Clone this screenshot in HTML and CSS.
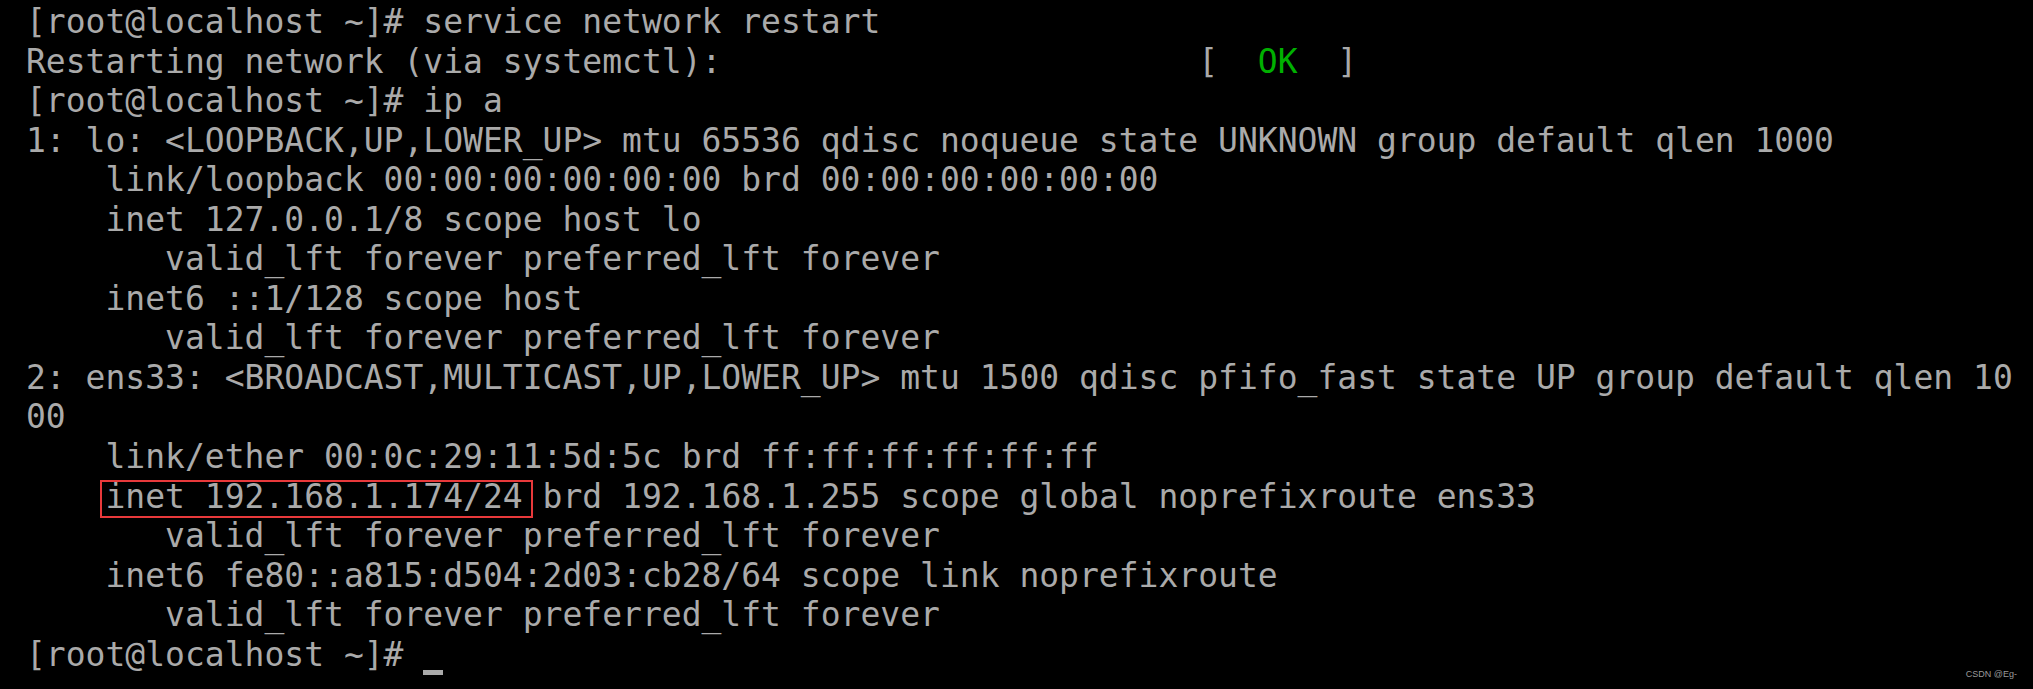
FILE: index.html
```html
<!DOCTYPE html>
<html lang="en">
<head>
<meta charset="utf-8">
<title>Terminal</title>
<link rel="stylesheet" href="styles.css">
</head>
<body>
<main class="screen">
<div class="console">
<div class="line">[root@localhost ~]# service network restart</div>
<div class="line"><span>Restarting network (via systemctl):                        [  </span><span class="ok">OK</span><span>  ]</span></div>
<div class="line">[root@localhost ~]# ip a</div>
<div class="line">1: lo: &lt;LOOPBACK,UP,LOWER_UP&gt; mtu 65536 qdisc noqueue state UNKNOWN group default qlen 1000</div>
<div class="line">    link/loopback 00:00:00:00:00:00 brd 00:00:00:00:00:00</div>
<div class="line">    inet 127.0.0.1/8 scope host lo</div>
<div class="line">       valid_lft forever preferred_lft forever</div>
<div class="line">    inet6 ::1/128 scope host</div>
<div class="line">       valid_lft forever preferred_lft forever</div>
<div class="line">2: ens33: &lt;BROADCAST,MULTICAST,UP,LOWER_UP&gt; mtu 1500 qdisc pfifo_fast state UP group default qlen 10</div>
<div class="line">00</div>
<div class="line">    link/ether 00:0c:29:11:5d:5c brd ff:ff:ff:ff:ff:ff</div>
<div class="line"><span>    </span><span class="mark">inet 192.168.1.174/24</span><span> brd 192.168.1.255 scope global noprefixroute ens33</span></div>
<div class="line">       valid_lft forever preferred_lft forever</div>
<div class="line">    inet6 fe80::a815:d504:2d03:cb28/64 scope link noprefixroute</div>
<div class="line">       valid_lft forever preferred_lft forever</div>
<div class="line"><span>[root@localhost ~]# </span><span class="cursor"></span></div>
</div>
<span class="watermark">CSDN @Eg-</span>
</main>
</body>
</html>
```

FILE: styles.css
```css
html, body {
  margin: 0;
  padding: 0;
  background: #000;
}

.screen {
  position: relative;
  width: 2033px;
  height: 689px;
  overflow: hidden;
  background: #000;
}

.console {
  display: flex;
  flex-direction: column;
  padding: 2px 0 0 26px;
  font-family: "DejaVu Sans Mono", "Liberation Mono", monospace;
  font-size: 33px;
  line-height: 39.56px;
  color: #aaaaaa;
}

.line {
  height: 39.56px;
  white-space: pre;
}

.ok {
  color: #00b000;
}

.mark {
  position: relative;
}

.mark::after {
  content: "";
  position: absolute;
  left: -5px;
  right: -10px;
  top: 3px;
  bottom: -2px;
  border: 2px solid #e8393b;
}

.cursor {
  display: inline-block;
  width: 20px;
  height: 5px;
  background: #aaaaaa;
  vertical-align: -9px;
}

.watermark {
  position: absolute;
  right: 16px;
  bottom: 10px;
  font-family: "Liberation Sans", Arial, sans-serif;
  font-size: 9px;
  color: #9a9a9a;
}
```
